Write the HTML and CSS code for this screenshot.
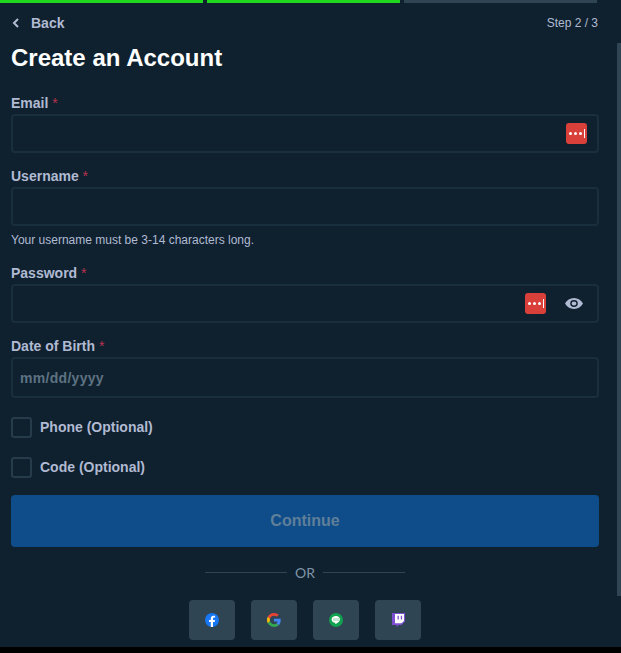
FILE: index.html
```html
<!DOCTYPE html>
<html lang="en">
<head>
<meta charset="UTF-8">
<meta name="viewport" content="width=device-width, initial-scale=1.0">
<title>Create an Account</title>
<link rel="stylesheet" href="styles.css">
</head>
<body>

<div class="modal">
    <div class="progress">
        <div class="progress-step done first"></div>
        <div class="progress-step done"></div>
        <div class="progress-step"></div>
    </div>

    <div class="top-row">
        <a class="back" href="#">
            <svg width="8" height="10" viewBox="0 0 8 10"><path d="M6 1 L2 5 L6 9" fill="none" stroke="#b1bad3" stroke-width="2"/></svg>
            <span>Back</span>
        </a>
        <span class="step">Step 2 / 3</span>
    </div>

    <h1 class="title">Create an Account</h1>

    <form class="form">
        <div class="field">
            <label class="label">Email <span class="req">*</span></label>
            <div class="input">
                <span class="lastpass"><i></i><i></i><i></i><b></b></span>
            </div>
        </div>

        <div class="field">
            <label class="label">Username <span class="req">*</span></label>
            <div class="input"></div>
            <div class="hint">Your username must be 3-14 characters long.</div>
        </div>

        <div class="field">
            <label class="label">Password <span class="req">*</span></label>
            <div class="input">
                <span class="lastpass"><i></i><i></i><i></i><b></b></span>
                <svg class="eye" width="18" height="11" viewBox="0 0 18 12" preserveAspectRatio="none">
                    <path fill="#b1bad3" fill-rule="evenodd" d="M9 0C5 0 1.800 2.400 0 6c1.800 3.600 5 6 9 6s7.200-2.400 9-6c-1.800-3.600-5-6-9-6zm0 2.200a3.800 3.800 0 1 1 0 7.600 3.800 3.800 0 0 1 0-7.600z"/>
                    <circle cx="9" cy="6" r="2.300" fill="#b1bad3"/>
                </svg>
            </div>
        </div>

        <div class="field field-last">
            <label class="label">Date of Birth <span class="req">*</span></label>
            <div class="input input-date">mm/dd/yyyy</div>
        </div>

        <div class="check-row"><span class="check"></span><span class="check-label">Phone (Optional)</span></div>
        <div class="check-row"><span class="check"></span><span class="check-label">Code (Optional)</span></div>

        <button class="continue" type="button">Continue</button>
    </form>

    <div class="or"><span class="or-line"></span><span class="or-text">OR</span><span class="or-line"></span></div>

    <div class="socials">
        <button class="social" type="button">
            <svg width="14" height="14" viewBox="0 0 14 14">
                <circle cx="7" cy="7" r="7" fill="#1877f2"/>
                <path fill="#fff" d="M9.700 9l.3-2H8V5.700c0-.6.300-1.100 1.200-1.100h.9V2.900S9.300 2.800 8.500 2.800C6.900 2.800 5.800 3.800 5.800 5.500V7H4v2h1.800v5h2.200V9z"/>
            </svg>
        </button>
        <button class="social" type="button">
            <svg width="14" height="14" viewBox="0 0 48 48">
                <path fill="#ea4335" d="M24 9.500c3.500 0 6.700 1.200 9.200 3.600l6.900-6.900C35.900 2.400 30.500 0 24 0 14.600 0 6.500 5.400 2.600 13.200l8 6.200C12.400 13.700 17.700 9.500 24 9.500z"/>
                <path fill="#4285f4" d="M47 24.500c0-1.600-.1-3.100-.4-4.500H24v9h12.900c-.6 3-2.200 5.500-4.800 7.200l7.700 6c4.500-4.200 7.200-10.300 7.200-17.700z"/>
                <path fill="#fbbc05" d="M10.500 28.600c-.5-1.400-.8-3-.8-4.600s.3-3.200.8-4.600l-8-6.200C.9 16.500 0 20.100 0 24s.9 7.500 2.600 10.800l7.900-6.200z"/>
                <path fill="#34a853" d="M24 48c6.500 0 11.900-2.100 15.900-5.800l-7.700-6c-2.200 1.500-4.900 2.300-8.200 2.300-6.300 0-11.600-4.200-13.500-10l-8 6.200C6.500 42.600 14.600 48 24 48z"/>
            </svg>
        </button>
        <button class="social" type="button">
            <svg width="14" height="14" viewBox="0 0 14 14">
                <circle cx="7" cy="7" r="7" fill="#12a150"/>
                <path fill="#fff" d="M7 3C4.500 3 2.600 4.500 2.600 6.400c0 1.700 1.500 3.100 3.500 3.400.3.100.3.300.2.900 0 .2.100.3.400.2 1.500-.7 4.200-2.400 4.200-4.500C10.900 4.500 9.500 3 7 3z"/>
                <path fill="#12a150" d="M4 5.800h6v.5H4zM4 6.900h6v.4H4z"/>
            </svg>
        </button>
        <button class="social" type="button">
            <svg width="13" height="14" viewBox="0 0 13 14">
                <path fill="#7b4fd0" d="M0 0h13v8.500L9.500 12H7l-2.500 2v-2H0z"/>
                <path fill="#fff" d="M3 1h9v7L9.500 10.200H3z"/>
                <path fill="#7b4fd0" d="M5.500 2.800h1.300v3.700H5.500zM8.800 2.800h1.300v3.700H8.800z"/>
            </svg>
        </button>
    </div>
</div>

<div class="scrollbar"></div>
<div class="bottom-strip"></div>

</body>
</html>
```

FILE: styles.css
```css
html, body {
    margin: 0;
    padding: 0;
    height: 100%;
    overflow: hidden;
    background-color: #0f212e;
    font-family: "Liberation Sans", Arial, sans-serif;
}

.modal {
    width: 598px;
}

/* progress bar */
.progress {
    display: flex;
    gap: 4px;
    height: 3px;
    margin-right: 1px;
}
.progress-step {
    flex: 1;
    background-color: #2f4553;
}
.progress-step.done {
    background-color: #1ed71e;
}
.progress-step.first {
    flex: none;
    width: 203px;
}

.top-row {
    display: flex;
    justify-content: space-between;
    align-items: center;
    height: 16px;
    padding: 12px 0 0 12px;
}
.back {
    display: flex;
    align-items: center;
    gap: 11px;
    color: #b1bad3;
    font-size: 14px;
    font-weight: bold;
    text-decoration: none;
}
.step {
    color: #b1bad3;
    font-size: 12px;
}

.title {
    margin: 13px 0 0 11px;
    color: #fff;
    font-size: 24px;
    line-height: 28px;
    font-weight: bold;
}

.form {
    padding: 23px 0 0 11px;
}

.field {
    margin-bottom: 15px;
}
.field-last {
    margin-bottom: 18px;
}
.label {
    display: block;
    height: 16px;
    line-height: 16px;
    margin-bottom: 3px;
    color: #b1bad3;
    font-size: 14px;
    font-weight: bold;
}
.req {
    color: #b8324f;
    font-weight: normal;
}
.input {
    display: flex;
    align-items: center;
    justify-content: flex-end;
    box-sizing: border-box;
    width: 588px;
    height: 39px;
    padding-right: 10px;
    border: 2px solid #1a2f3d;
    border-radius: 4px;
    background-color: #0f212e;
}
.input-date {
    justify-content: flex-start;
    height: 41px;
    padding-left: 7px;
    color: #5d7283;
    font-size: 14px;
    font-weight: bold;
    letter-spacing: 0.3px;
}
.hint {
    margin-top: 7px;
    margin-bottom: 18px;
    color: #b1bad3;
    font-size: 12px;
    line-height: 14px;
}

/* password manager badge */
.lastpass {
    display: flex;
    align-items: center;
    justify-content: center;
    gap: 2px;
    width: 21px;
    height: 21px;
    border-radius: 3px;
    background-color: #d9403a;
}
.lastpass i {
    width: 3px;
    height: 3px;
    border-radius: 50%;
    background-color: #fff;
}
.lastpass b {
    width: 1px;
    height: 9px;
    background-color: #fff;
}
.eye {
    margin: 0 4px 0 19px;
}

.check-row {
    display: flex;
    align-items: center;
    gap: 8px;
    height: 22px;
    margin-bottom: 18px;
}
.check {
    box-sizing: border-box;
    width: 21px;
    height: 21px;
    border: 2px solid #263c4a;
    border-radius: 3px;
}
.check-label {
    color: #b1bad3;
    font-size: 14px;
    font-weight: bold;
}

.continue {
    display: block;
    width: 588px;
    height: 52px;
    margin-top: -1px;
    border: none;
    border-radius: 4px;
    background-color: #0f4d8a;
    color: #5f7f99;
    font-family: inherit;
    font-size: 16px;
    font-weight: bold;
}

.or {
    display: flex;
    justify-content: center;
    align-items: center;
    gap: 7px;
    margin: 16px 0 0 11px;
    width: 588px;
    height: 18px;
}
.or-line {
    width: 82px;
    height: 1px;
    background-color: #2f4553;
}
.or-text {
    width: 22px;
    text-align: center;
    color: #8094a8;
    font-family: "Lato", sans-serif;
    font-size: 14px;
}

.socials {
    display: flex;
    justify-content: center;
    gap: 16px;
    width: 610px;
    margin-top: 19px;
}
.social {
    display: flex;
    align-items: center;
    justify-content: center;
    width: 46px;
    height: 40px;
    padding: 0;
    border: none;
    border-radius: 4px;
    background-color: #2f4553;
}

/* what lies over the page: scrollbar and the strip at the bottom */
.scrollbar {
    position: absolute;
    top: 43px;
    right: 0;
    width: 4px;
    height: 553px;
    background-color: #2f4553;
}
.bottom-strip {
    position: absolute;
    left: 0;
    right: 0;
    bottom: 0;
    height: 6px;
    background-color: #000;
}
```
